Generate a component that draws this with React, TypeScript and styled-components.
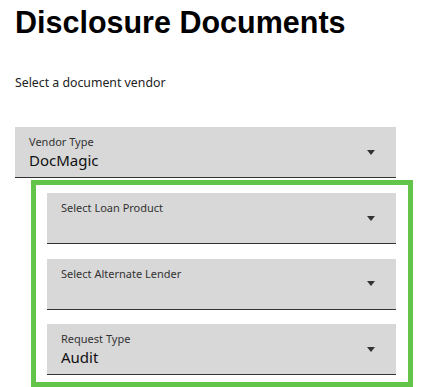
import React from 'react';
import styled, { createGlobalStyle } from 'styled-components';

const GlobalStyle = createGlobalStyle`
  body {
    margin: 0;
    background: #fff;
    font-family: "Noto Sans", "Open Sans", sans-serif;
  }
`;

type FieldProps = { label: string; value?: string };

const SelectField = ({ label, value }: FieldProps) => (
  <StyledField>
    <div className="text">
      <span className="label">{label}</span>
      {value && <span className="value">{value}</span>}
    </div>
    <Caret />
  </StyledField>
);

const App = () => (
  <Page>
    <GlobalStyle />
    <Title>Disclosure Documents</Title>
    <Intro>Select a document vendor</Intro>
    <SelectField label="Vendor Type" value="DocMagic" />
    <Highlight>
      <SelectField label="Select Loan Product" />
      <SelectField label="Select Alternate Lender" />
      <SelectField label="Request Type" value="Audit" />
    </Highlight>
  </Page>
);

const Page = styled.div`
  width: 381px;
  padding: 0 0 0 15px;
`;

const Title = styled.h1`
  margin: 5px 0 0;
  font-family: "Liberation Sans", Arial, sans-serif;
  font-size: 30.5px;
  font-weight: bold;
  line-height: normal;
  color: #000;
`;

const Intro = styled.p`
  margin: 34px 0 36px;
  font-size: 12.3px;
  line-height: 17px;
  color: #222;
`;

const StyledField = styled.div`
  box-sizing: border-box;
  height: 51px;
  background: #d8d8d8;
  border-bottom: 1px solid #333;
  display: flex;
  align-items: center;
  justify-content: space-between;
  padding: 0 21px 0 14px;

  .text {
    align-self: flex-start;
    display: flex;
    flex-direction: column;
    padding-top: 7px;
  }
  .label {
    font-size: 11px;
    line-height: 16px;
    color: #333;
  }
  .value {
    font-size: 15px;
    line-height: 20px;
    color: #111;
  }
`;

const Caret = styled.span`
  width: 0;
  height: 0;
  border-left: 4.5px solid transparent;
  border-right: 4.5px solid transparent;
  border-top: 5px solid #333;
`;

const Highlight = styled.div`
  margin: 2px 0 0 16px;
  width: 382px;
  box-sizing: border-box;
  border: 5px solid #62c449;
  padding: 8px 12px 7px 11px;
  display: flex;
  flex-direction: column;
  gap: 14.5px;
`;

export default App;
